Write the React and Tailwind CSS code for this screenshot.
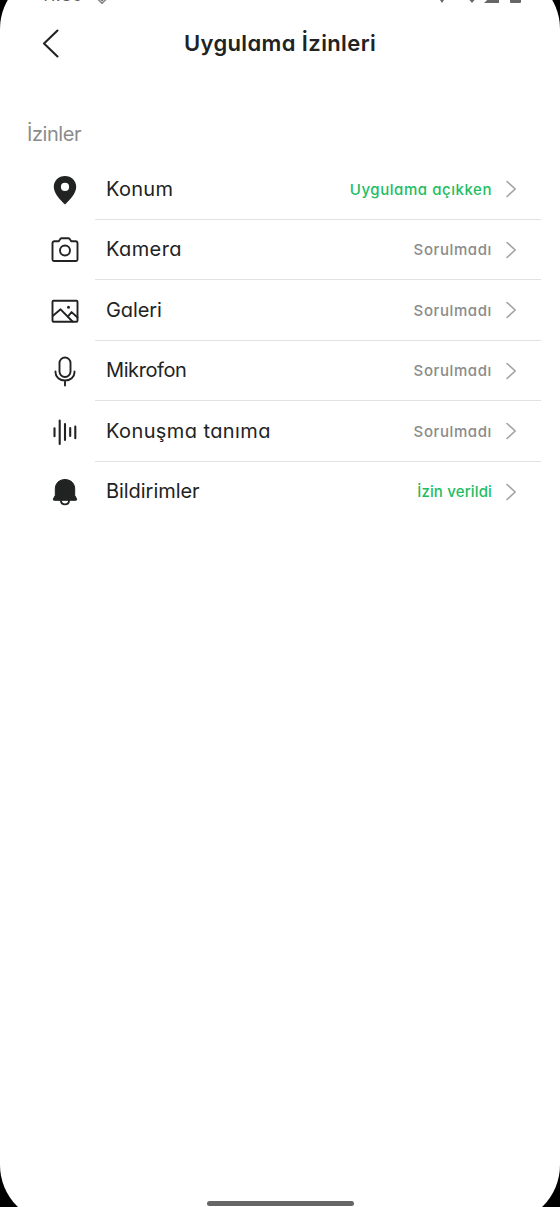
const iconProps = {
  width: 32,
  height: 32,
  viewBox: "0 0 32 32",
  fill: "none",
  stroke: "#212322",
  strokeWidth: 1.9,
  strokeLinecap: "round",
  strokeLinejoin: "round",
};

function PinIcon() {
  return (
    <svg {...iconProps}>
      <path
        d="M16 2C9.7 2 4.800 6.700 4.800 12.800c0 6.800 6.600 13.200 11.200 17.800 4.600-4.600 11.200-11 11.200-17.800C27.200 6.700 22.300 2 16 2Zm0 6.800a4.100 4.100 0 1 1 0 8.200 4.100 4.100 0 0 1 0-8.200Z"
        fill="#212322"
        fillRule="evenodd"
        stroke="none"
      />
    </svg>
  );
}

function CameraIcon() {
  return (
    <svg {...iconProps}>
      <path d="M3.500 25.500V9.200a2 2 0 0 1 2-2h4.300l1.500-2.200q.5-.7 1.400-.7h6.600q.9 0 1.400.7l1.500 2.200h4.300a2 2 0 0 1 2 2v16.300a1.500 1.500 0 0 1-1.500 1.500H5a1.500 1.500 0 0 1-1.500-1.500Z" />
      <circle cx="16" cy="16.500" r="5" />
    </svg>
  );
}

function GalleryIcon() {
  return (
    <svg {...iconProps}>
      <rect x="3.500" y="5.700" width="25" height="21" rx="1" />
      <path d="m4 20.700 7.600-6.400L23.500 26.500" />
      <path d="m19 21.300 3.600-4.200 5.900 5.400" />
      <circle cx="19.500" cy="12.200" r="1.500" fill="#212322" stroke="none" />
    </svg>
  );
}

function MicIcon() {
  return (
    <svg {...iconProps}>
      <rect x="10.500" y="2.500" width="11" height="19.500" rx="5.500" />
      <path d="M6.500 16.500v1a9.500 8 0 0 0 19 0v-1M16 25.500v5" />
    </svg>
  );
}

function WaveIcon() {
  return (
    <svg {...iconProps} strokeWidth="2.100">
      <path d="M5.500 12.300v8M10.700 4.500v23.500M16 8v16M21.200 12v8M26.300 10.500v11.800" />
    </svg>
  );
}

function BellIcon() {
  return (
    <svg {...iconProps}>
      <path
        d="M16 3.500C10.200 3.500 6.300 7.300 6.300 13v6.300l-1.900 3.600q-.5 1.400.8 1.400h21.600q1.300 0 .8-1.400l-1.900-3.600V13C25.700 7.300 21.800 3.500 16 3.500Z"
        fill="#212322"
        strokeWidth="1"
      />
      <path d="M12 24.800c.4 4.700 7.600 4.700 8 0" />
    </svg>
  );
}

function Chevron() {
  return (
    <svg width="12" height="18" viewBox="0 0 12 18" fill="none">
      <path d="m2 1.500 8.200 7.500L2 16.500" stroke="#a2a2a2" strokeWidth="1.600" strokeLinecap="round" strokeLinejoin="round" />
    </svg>
  );
}

const permissions = [
  { name: "Konum", Icon: PinIcon, status: "Uygulama açıkken", granted: true, tracking: "tracking-[0.3px]", statusTracking: "tracking-[0.55px]" },
  { name: "Kamera", Icon: CameraIcon, status: "Sorulmadı", tracking: "tracking-[0.4px]", statusTracking: "tracking-[0.6px]" },
  { name: "Galeri", Icon: GalleryIcon, status: "Sorulmadı", tracking: "tracking-[-0.1px]", statusTracking: "tracking-[0.6px]" },
  { name: "Mikrofon", Icon: MicIcon, status: "Sorulmadı", tracking: "tracking-[-0.4px]", statusTracking: "tracking-[0.6px]" },
  { name: "Konuşma tanıma", Icon: WaveIcon, status: "Sorulmadı", tracking: "tracking-[0.4px]", statusTracking: "tracking-[0.6px]" },
  { name: "Bildirimler", Icon: BellIcon, status: "İzin verildi", granted: true, tracking: "tracking-[-0.05px]", statusTracking: "tracking-[0.15px]" },
];

export default function App() {
  return (
    <div className="h-[1207px] w-[560px] overflow-hidden bg-black font-['Inter',sans-serif] [font-feature-settings:'cv11']">
      <div className="-mt-[29px] flex h-[1252px] flex-col rounded-[58px] bg-white text-[#212322]">
        {/* status bar, mostly scrolled out of view */}
        <div className="flex h-[34px] items-end justify-between pl-[41px] pr-[38px] text-[#5f5f5f]">
          <div className="flex items-end gap-[13px]">
            <span className="pb-px text-[17px] leading-[18px] tracking-[0.5px]">11:39</span>
            <svg width="12" height="12" viewBox="0 0 12 12" fill="none" stroke="#777" strokeWidth="1.200">
              <path d="M1 5.500 6 10.500l5-5M4 6l2 2 2-2" />
            </svg>
          </div>
          <div className="flex items-end pb-[1px]">
            <svg width="82" height="12" viewBox="0 0 82 12" fill="#666">
              <path d="M-2 5h8L2 11ZM27 5h10l-5 6ZM44 11 59 -3v14ZM70 1h11v9q0 1-1 1h-9q-1 0-1-1Z" />
            </svg>
          </div>
        </div>

        <header className="grid h-[76px] grid-cols-[120px_1fr_120px] items-center">
          <button className="pl-[41px]">
            <svg width="20" height="32" viewBox="0 0 20 32" fill="none">
              <path d="M16.500 3.500 3 16.500l13.500 13" stroke="#212322" strokeWidth="2.100" strokeLinecap="round" strokeLinejoin="round" />
            </svg>
          </button>
          <h1 className="whitespace-nowrap pt-px text-center text-[22px] font-semibold tracking-[0.38px]">Uygulama İzinleri</h1>
        </header>

        <h2 className="mt-[38px] pl-[27px] text-[20px] leading-[30px] tracking-[-0.45px] text-[#8b8b8b]">İzinler</h2>

        <ul className="mt-[10.600px]">
          {permissions.map(({ name, Icon, status, granted, tracking, statusTracking }) => (
            <li key={name} className="flex h-[60.450px] pl-[49.300px] pr-[19px]">
              <div className="flex w-[46.200px] items-center">
                <Icon />
              </div>
              <div className="flex flex-1 items-center border-b border-[#e2e2e2] pl-[10.500px] pr-[24.500px] [li:last-child>&]:border-transparent">
                <span className={`flex-1 pb-px text-[20px] ${tracking}`}>{name}</span>
                <span className={`mr-[12.500px] pt-[1.500px] text-[15px] font-medium ${statusTracking} ${granted ? "text-[#22bd62]" : "text-[#8b8b8b]"}`}>{status}</span>
                <Chevron />
              </div>
            </li>
          ))}
        </ul>

        <div className="mx-auto mb-[17px] mt-auto h-[5px] w-[147px] rounded-full bg-[#666]" />
      </div>
    </div>
  );
}
